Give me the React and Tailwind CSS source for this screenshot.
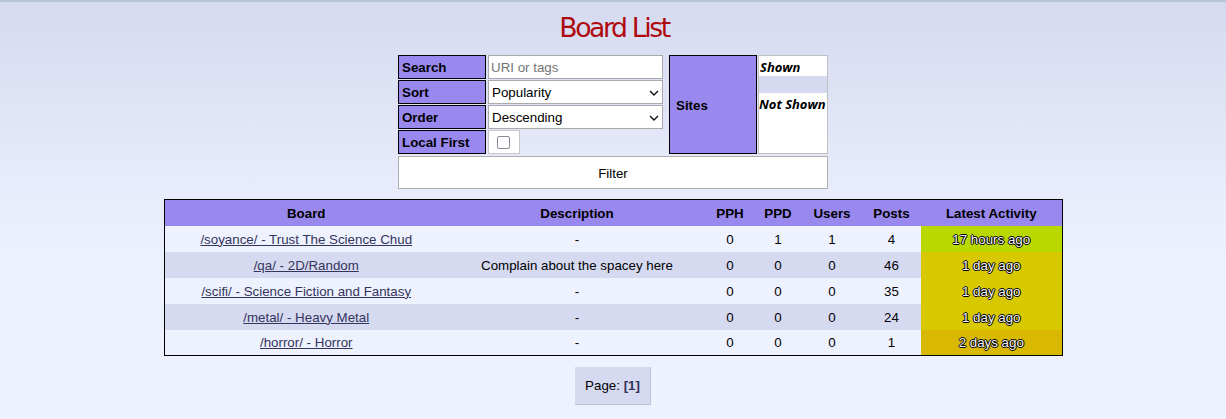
import React from "react";

const rows = [
  { board: "/soyance/ - Trust The Science Chud", desc: "-", pph: 0, ppd: 1, users: 1, posts: 4, act: "17 hours ago", color: "bg-[#b8d800]" },
  { board: "/qa/ - 2D/Random", desc: "Complain about the spacey here", pph: 0, ppd: 0, users: 0, posts: 46, act: "1 day ago", color: "bg-[#d8c800]" },
  { board: "/scifi/ - Science Fiction and Fantasy", desc: "-", pph: 0, ppd: 0, users: 0, posts: 35, act: "1 day ago", color: "bg-[#d8c800]" },
  { board: "/metal/ - Heavy Metal", desc: "-", pph: 0, ppd: 0, users: 0, posts: 24, act: "1 day ago", color: "bg-[#d8c800]" },
  { board: "/horror/ - Horror", desc: "-", pph: 0, ppd: 0, users: 0, posts: 1, act: "2 days ago", color: "bg-[#d8b800]" },
];

function Chevron() {
  return (
    <svg width="10" height="6" viewBox="0 0 10 6" className="ml-auto mr-[3px]">
      <path d="M1 1l4 4 4-4" fill="none" stroke="#111" strokeWidth="1.4" />
    </svg>
  );
}

function Label({ children }) {
  return (
    <div className="w-[88px] h-[24px] border border-black bg-[#9988ee] font-bold flex items-center pl-[3px] pt-[2px] text-black">
      {children}
    </div>
  );
}

export default function App() {
  return (
    <div
      className="min-h-[419px] w-full border-t-[2px] border-[#b7c5d9] bg-[linear-gradient(to_bottom,#d6daf0_0px,#eef2ff_260px,#eef2ff_100%)] text-[13.33px] text-black flex flex-col items-center"
      style={{ fontFamily: '"Liberation Sans", Arial, sans-serif' }}
    >
      <h1
        className="mt-[10px] h-[32px] leading-[32px] text-[26.67px] tracking-[-2.4px] text-[#af0a0f] pl-[2px]"
        style={{ fontFamily: '"DejaVu Sans", Verdana, sans-serif' }}
      >
        Board List
      </h1>

      <div className="mt-[11px] w-[430px] flex flex-col">
        <div className="flex h-[99px]">
          <div className="flex flex-col gap-[1px]">
            <div className="flex gap-[2px]">
              <Label>Search</Label>
              <div className="w-[175px] h-[24px] border border-[#a9a9a9] bg-white flex items-center pl-[2px] pt-[2px] text-[#757575]">
                URI or tags
              </div>
            </div>
            <div className="flex gap-[2px]">
              <Label>Sort</Label>
              <div className="w-[175px] h-[24px] border border-[#a9a9a9] bg-white flex items-center pl-[3px] pt-[2px]">
                Popularity
                <Chevron />
              </div>
            </div>
            <div className="flex gap-[2px]">
              <Label>Order</Label>
              <div className="w-[175px] h-[24px] border border-[#a9a9a9] bg-white flex items-center pl-[3px] pt-[2px]">
                Descending
                <Chevron />
              </div>
            </div>
            <div className="flex gap-[2px]">
              <Label>Local First</Label>
              <div className="w-[32px] h-[24px] border border-[#c8c8c8] bg-white flex items-center pl-[8px]">
                <div className="w-[13px] h-[13px] border-[1.5px] border-[#8a8a96] rounded-[2px]" />
              </div>
            </div>
          </div>
          <div className="ml-[6px] w-[88px] h-[99px] border border-black bg-[#9988ee] font-bold flex items-center pl-[6px] pt-[2px]">
            Sites
          </div>
          <div
            className="ml-[1px] w-[70px] h-[99px] border border-[#c0c0c0] bg-white flex flex-col italic font-bold text-[13px]"
            style={{ fontFamily: '"Open Sans", sans-serif' }}
          >
            <div className="h-[20px] leading-[20px] pl-[1px] pt-[1px]">Shown</div>
            <div className="h-[17px] bg-[#d6daf0]" />
            <div className="h-[20px] leading-[20px] whitespace-nowrap pt-[1px]">Not Shown</div>
          </div>
        </div>
        <div className="mt-[2px] h-[33px] border border-[#b0b0b0] bg-white flex items-center justify-center pt-[2px]">
          Filter
        </div>
      </div>

      <table className="mt-[10px] w-[899px] table-fixed border border-black border-collapse">
        <colgroup>
          <col className="w-[284px]" />
          <col className="w-[258px]" />
          <col className="w-[48px]" />
          <col className="w-[48px]" />
          <col className="w-[60px]" />
          <col className="w-[59px]" />
          <col className="w-[141px]" />
        </colgroup>
        <thead>
          <tr className="h-[26px] bg-[#9988ee] font-bold">
            <th className="p-0 pt-[2px] font-bold">Board</th>
            <th className="p-0 pt-[2px] font-bold">Description</th>
            <th className="p-0 pt-[2px] font-bold">PPH</th>
            <th className="p-0 pt-[2px] font-bold">PPD</th>
            <th className="p-0 pt-[2px] font-bold">Users</th>
            <th className="p-0 pt-[2px] font-bold">Posts</th>
            <th className="p-0 pt-[2px] font-bold">Latest Activity</th>
          </tr>
        </thead>
        <tbody>
          {rows.map((r, i) => (
            <tr key={i} className={`h-[26px] text-center ${i % 2 === 0 ? "bg-[#eef2ff]" : "bg-[#d6daf0]"}`}>
              <td className="p-0 pt-[2px]">
                <a href="#" className="text-[#34345c] underline">{r.board}</a>
              </td>
              <td className="p-0 pt-[2px]">{r.desc}</td>
              <td className="p-0 pt-[2px]">{r.pph}</td>
              <td className="p-0 pt-[2px]">{r.ppd}</td>
              <td className="p-0 pt-[2px]">{r.users}</td>
              <td className="p-0 pt-[2px]">{r.posts}</td>
              <td
                className={`p-0 pt-[2px] ${r.color} text-[#f4f4f4] [text-shadow:1px_0_0_#000,-1px_0_0_#000,0_1px_0_#000,0_-1px_0_#000,0_0_1px_#000]`}
              >
                {r.act}
              </td>
            </tr>
          ))}
        </tbody>
      </table>

      <div className="mt-[11px] w-[76px] h-[38px] bg-[#d6daf0] border-r border-b border-[#b7c5d9] flex items-center justify-center">
        Page:&nbsp;<span className="font-bold text-[#34345c]">[1]</span>
      </div>
    </div>
  );
}
